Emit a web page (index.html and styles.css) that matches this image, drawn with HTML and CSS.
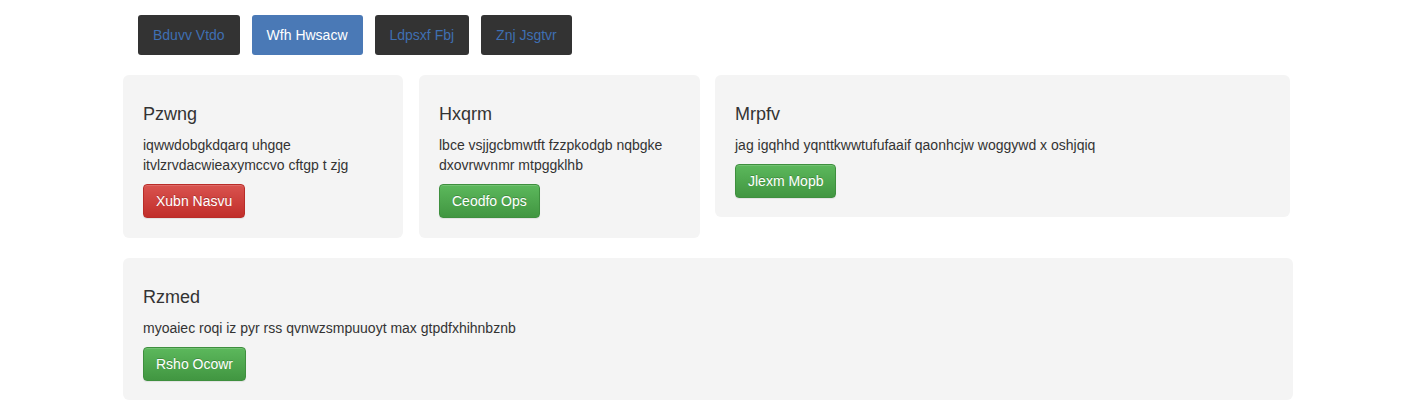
FILE: index.html
```html
<!DOCTYPE html>
<html>
<head>
<meta charset="utf-8">
<link rel="stylesheet" href="styles.css">
</head>
<body>
<div class="page">
  <nav class="tabs">
    <a class="tab">Bduvv Vtdo</a>
    <a class="tab active">Wfh Hwsacw</a>
    <a class="tab">Ldpsxf Fbj</a>
    <a class="tab">Znj Jsgtvr</a>
  </nav>
  <div class="row-top">
    <div class="card">
      <h4 class="card-title">Pzwng</h4>
      <p class="card-text">iqwwdobgkdqarq uhgqe itvlzrvdacwieaxymccvo cftgp t zjg</p>
      <button class="btn btn-danger">Xubn Nasvu</button>
    </div>
    <div class="card">
      <h4 class="card-title">Hxqrm</h4>
      <p class="card-text">lbce vsjjgcbmwtft fzzpkodgb nqbgke dxovrwvnmr mtpggklhb</p>
      <button class="btn btn-success">Ceodfo Ops</button>
    </div>
    <div class="card">
      <h4 class="card-title">Mrpfv</h4>
      <p class="card-text">jag igqhhd yqnttkwwtufufaaif qaonhcjw woggywd x oshjqiq</p>
      <button class="btn btn-success">Jlexm Mopb</button>
    </div>
  </div>
  <div class="row-bottom">
    <div class="card">
      <h4 class="card-title">Rzmed</h4>
      <p class="card-text">myoaiec roqi iz pyr rss qvnwzsmpuuoyt max gtpdfxhihnbznb</p>
      <button class="btn btn-success">Rsho Ocowr</button>
    </div>
  </div>
</div>
</body>
</html>
```

FILE: styles.css
```css
* { box-sizing: border-box; }
html, body { margin: 0; padding: 0; background: #fff; }
body {
  font-family: "Liberation Sans", Arial, Helvetica, sans-serif;
  font-size: 14px;
  line-height: 20px;
  color: #333;
}
.page {
  width: 1170px;
  margin-left: 123px;
}
.tabs {
  display: flex;
  gap: 12px;
  padding: 15px 0 0 15px;
  height: 75px;
}
.tab {
  display: block;
  height: 40px;
  padding: 10px 15px;
  background: #333;
  color: #3f6fb2;
  border-radius: 3px;
  text-decoration: none;
}
.tab.active {
  background: #4a79b6;
  color: #fff;
}
.row-top {
  display: grid;
  grid-template-columns: 280px 281px 574px;
  column-gap: 16px;
  align-items: start;
  width: 1166px;
}
.row-top .card:nth-child(3) { margin-left: -1px; }
.row-bottom {
  margin-top: 20px;
}
.card {
  background: #f4f4f4;
  border-radius: 6px;
  padding: 20px;
}
.row-top .card:nth-child(-n+2) { height: 163px; }
.row-top .card:nth-child(3) { height: 142px; }
.row-bottom .card { height: 142px; }
.card-title {
  font-size: 18px;
  font-weight: 500;
  line-height: 19.8px;
  margin: 10px 0 10px;
}
.card-text {
  margin: 0 0 9px;
}
.btn {
  display: inline-block;
  font-family: inherit;
  font-size: 14px;
  line-height: 20px;
  padding: 6px 12px;
  height: 34px;
  border: 1px solid transparent;
  border-radius: 4px;
  color: #fff;
  text-shadow: 0 -1px 0 rgba(0,0,0,.2);
  box-shadow: inset 0 1px 0 rgba(255,255,255,.15), 0 1px 1px rgba(0,0,0,.075);
  cursor: pointer;
}
.btn-danger {
  background-image: linear-gradient(to bottom, #d9534f 0%, #c12e2a 100%);
  border-color: #b92c28;
}
.btn-success {
  background-image: linear-gradient(to bottom, #5cb85c 0%, #419641 100%);
  border-color: #3e8f3e;
}
```
